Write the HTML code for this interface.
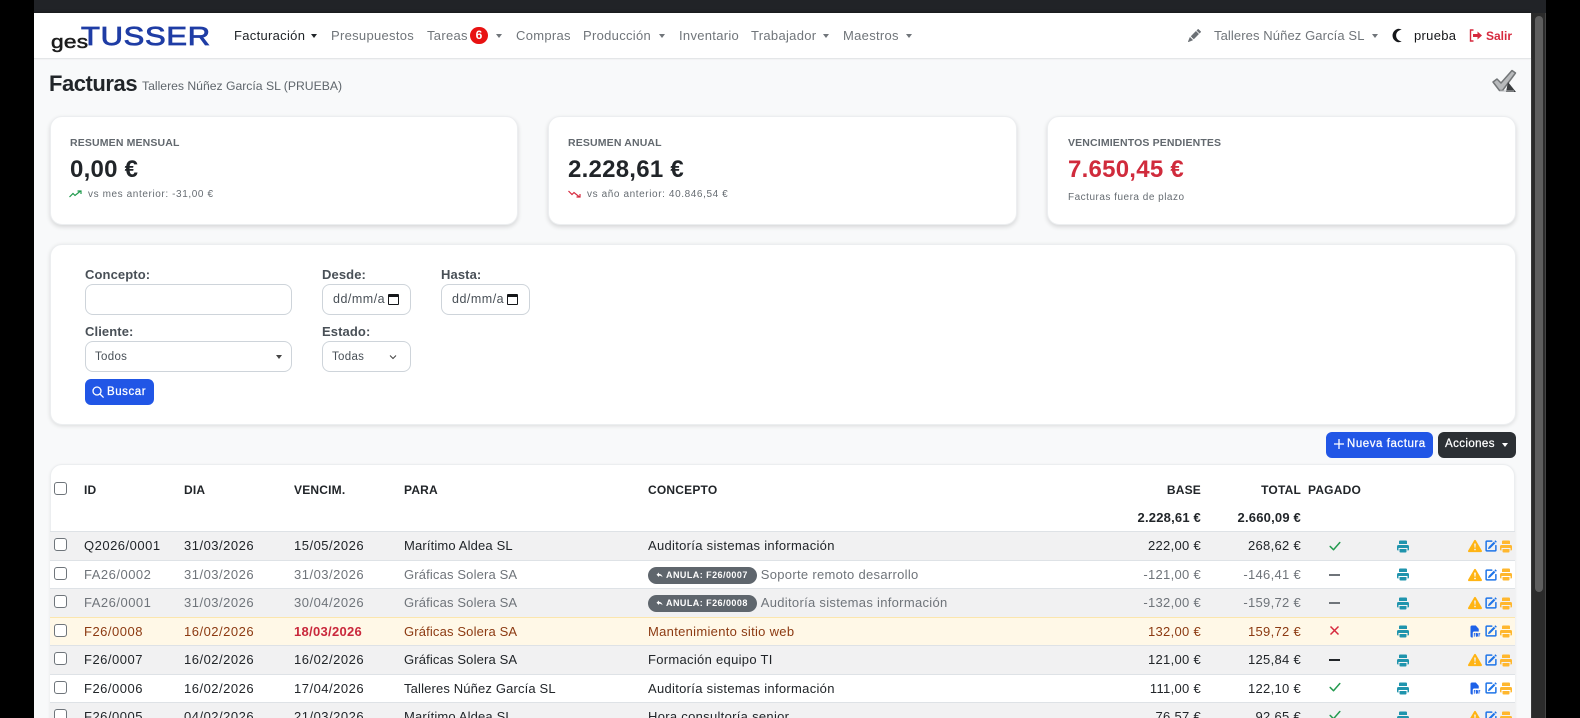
<!DOCTYPE html>
<html lang="es"><head><meta charset="utf-8"><title>Facturas</title>
<style>
*{box-sizing:border-box}
html,body{margin:0;padding:0;width:1580px;height:718px;overflow:hidden;background:#000;font-family:"Liberation Sans",sans-serif;color:#212529}
.a{position:absolute;white-space:nowrap}
#page{position:absolute;left:34px;top:0;width:1497px;height:718px;background:#f8f9fa}
#stage{position:absolute;left:0;top:0;width:1580px;height:718px;overflow:hidden}
.nav{font-size:13px;letter-spacing:.3px;color:#70757a;top:28px;line-height:16px}
.car{position:absolute;width:0;height:0;border-left:3.5px solid transparent;border-right:3.5px solid transparent;border-top:4px solid #70757a}
.card{position:absolute;background:#fff;border-radius:12px;box-shadow:0 2px 5px rgba(0,0,0,.14);border:1px solid #eceef0}
.lbl{font-size:10.5px;font-weight:bold;letter-spacing:.15px;color:#62686e;top:136px;line-height:14px}
.big{font-size:24px;font-weight:bold;top:156px;line-height:28px;letter-spacing:.25px}
.sm{font-size:10px;color:#666c72;letter-spacing:.6px;top:188px;line-height:13px}
.fl{font-size:13px;font-weight:bold;color:#495057;line-height:16px;letter-spacing:.1px}
.in{position:absolute;background:#fff;border:1px solid #ced4da;border-radius:8px;font-size:11.5px;color:#495057;letter-spacing:.3px;line-height:31px;height:31px}
.dt{font-size:12.5px;letter-spacing:.5px;line-height:29px;padding-left:10px;overflow:hidden}
.btn{position:absolute;border-radius:6px;color:#fff;font-size:11.5px;letter-spacing:.55px;text-align:left;-webkit-text-stroke:.25px #fff}
.r{position:absolute;left:50px;width:1465px;height:29px;font-size:13px;letter-spacing:.3px;line-height:28px;border-top:1px solid #dee2e6}
.s{height:28px;line-height:27px}
.r span{position:absolute;top:0;white-space:nowrap}
.g{background:#f1f1f2}.w{background:#fff}
.m{color:#6f747a}
.am{background:#fff8e7;color:#8c3a12;border-top:1px solid #fbe6ae}
.ck{position:absolute;left:4px;top:6px;width:13px;height:13px;border:1px solid #6f757b;border-radius:3px;background:#fff}
.c1{left:34px;letter-spacing:.5px}.c2{left:134px;letter-spacing:.5px}.c3{left:244px;letter-spacing:.5px}.c4{left:354px;letter-spacing:.15px}.c5{left:598px}
.c6{right:314px}.c7{right:214px}
.th{font-size:12px;font-weight:bold;letter-spacing:.2px;color:#212529;line-height:14px;top:483px}
.pill{display:inline-block;background:#5f666d;color:#fff;font-size:9px;font-weight:bold;border-radius:9px;height:17px;line-height:17px;padding:0 9px 0 18px;letter-spacing:.45px;vertical-align:1px;position:relative;margin-right:4px}
.pill svg{position:absolute;left:8px;top:5px}
svg.i{position:absolute;display:block}
</style></head>
<body>
<svg width="0" height="0" style="position:absolute">
<symbol id="pr" viewBox="0 0 12 13"><path d="M3 .5h6a1 1 0 0 1 1 1V4H2V1.500a1 1 0 0 1 1-1z"/><path d="M1.500 5h9A1.500 1.500 0 0 1 12 6.500v3a1 1 0 0 1-1 1h-.5V8h-9v2.500H1a1 1 0 0 1-1-1v-3A1.500 1.500 0 0 1 1.500 5z"/><path d="M2.500 9h7v2.500a1 1 0 0 1-1 1h-5a1 1 0 0 1-1-1z"/></symbol>
<symbol id="ed" viewBox="0 0 16 16"><path d="M15.502 1.94a.5.5 0 0 1 0 .706L14.459 3.69l-2-2L13.502.646a.5.5 0 0 1 .707 0l1.293 1.293zm-1.75 2.456-2-2L4.939 9.21a.5.5 0 0 0-.121.196l-.805 2.414a.25.25 0 0 0 .316.316l2.414-.805a.5.5 0 0 0 .196-.12l6.813-6.814z"/><path d="M1 13.5A1.5 1.5 0 0 0 2.5 15h11a1.5 1.5 0 0 0 1.5-1.5v-6a.5.5 0 0 0-1 0v6a.5.5 0 0 1-.5.5h-11a.5.5 0 0 1-.5-.5v-11a.5.5 0 0 1 .5-.5H9a.5.5 0 0 0 0-1H2.5A1.5 1.5 0 0 0 1 2.5v11z" stroke="currentColor" stroke-width="1"/></symbol>
<symbol id="wa" viewBox="0 0 16 16"><path d="M8.982 1.566a1.13 1.13 0 0 0-1.96 0L.165 13.233c-.457.778.091 1.767.98 1.767h13.713c.889 0 1.438-.99.98-1.767L8.982 1.566zM8 5c.535 0 .954.462.9.995l-.35 3.507a.552.552 0 0 1-1.1 0L7.1 5.995A.905.905 0 0 1 8 5zm.002 6a1 1 0 1 1 0 2 1 1 0 0 1 0-2z"/></symbol>
<symbol id="pd" viewBox="0 0 16 16"><path d="M2 2a2 2 0 0 1 2-2h5l4 4.5V8H7a2 2 0 0 0-2 2v6H4a2 2 0 0 1-2-2V2z"/><path d="M6.5 10h2v1h-1v1h1v1h-1v2h-1zM9.2 10h1.6c.8 0 1.2.7 1.2 2.500s-.4 2.500-1.200 2.500H9.200zM12.700 10h2.300v1h-1.300v1h1.100v1h-1.100v2h-1z"/></symbol>
<symbol id="ok" viewBox="0 0 16 16"><path d="M2.500 8.500l3.800 3.800 7.200-8.300" fill="none" stroke="currentColor" stroke-width="1.700" stroke-linecap="round" stroke-linejoin="round"/></symbol>
</svg>
<div id="stage">
<div id="page"></div>
<div class="a" style="left:34px;top:0;width:1512px;height:13px;background:#212327"></div>
<div class="a" style="left:1531px;top:13px;width:15px;height:705px;background:#2b2b2b;border-left:1px solid #3a3a3a;border-right:1px solid #444"></div>
<div class="a" style="left:1535px;top:16px;width:8px;height:576px;background:#5e5e5e;border-radius:4px"></div>

<!-- navbar -->
<div class="a" style="left:34px;top:13px;width:1497px;height:46px;background:#fff;border-bottom:1px solid #e4e6e8;box-shadow:0 -1px 2px rgba(0,0,0,.3)"></div>
<div class="a" style="left:51px;top:32px;font-size:18px;line-height:20px;color:#1c1c1c;letter-spacing:.2px;transform:scaleX(1.26);transform-origin:left;-webkit-text-stroke:.5px #1c1c1c">ges</div>
<div class="a" style="left:81px;top:22px;font-size:26px;line-height:28px;color:#1f3da5;letter-spacing:.6px;transform:scaleX(1.19);transform-origin:left;-webkit-text-stroke:.8px #1f3da5">TUSSER</div>
<div class="a nav" style="left:234px;color:#212529">Facturación</div><div class="car" style="left:311px;top:34px;border-top-color:#212529"></div>
<div class="a nav" style="left:331px">Presupuestos</div>
<div class="a nav" style="left:427px">Tareas</div>
<div class="a" style="left:470px;top:27px;width:18px;height:17px;border-radius:9px;background:#e81212;color:#fff;font-size:12px;font-weight:bold;line-height:17px;text-align:center">6</div>
<div class="car" style="left:496px;top:34px"></div>
<div class="a nav" style="left:516px">Compras</div>
<div class="a nav" style="left:583px">Producción</div><div class="car" style="left:659px;top:34px"></div>
<div class="a nav" style="left:679px">Inventario</div>
<div class="a nav" style="left:751px">Trabajador</div><div class="car" style="left:823px;top:34px"></div>
<div class="a nav" style="left:843px">Maestros</div><div class="car" style="left:906px;top:34px"></div>
<svg class="i" style="left:1188px;top:29px;color:#6c7176" width="13" height="13" viewBox="0 0 16 16" fill="currentColor"><path d="M12.854.146a.5.5 0 0 0-.707 0L10.500 1.793 14.207 5.500l1.647-1.646a.5.5 0 0 0 0-.708l-3-3zm.646 6.061L9.793 2.500 3.293 9H3.500a.5.5 0 0 1 .5.500v.5h.5a.5.5 0 0 1 .5.500v.5h.5a.5.5 0 0 1 .5.500v.5h.5a.5.5 0 0 1 .5.500v.207l6.500-6.500zm-7.468 7.468A.5.5 0 0 1 6 13.500V13h-.5a.5.5 0 0 1-.5-.5V12h-.5a.5.5 0 0 1-.5-.5V11h-.5a.5.5 0 0 1-.5-.5V10h-.5a.499.499 0 0 1-.175-.032l-.179.178a.5.5 0 0 0-.11.168l-2 5a.5.5 0 0 0 .65.650l5-2a.5.5 0 0 0 .168-.110l.178-.178z"/></svg>
<div class="a nav" style="left:1214px;letter-spacing:.1px">Talleres Núñez García SL</div><div class="car" style="left:1372px;top:34px"></div>
<svg class="i" style="left:1390px;top:28px" width="12" height="15" viewBox="0 0 11 13" fill="#15171a"><path d="M7.500.300A6.300 6.300 0 0 0 7.500 12.700c1.200 0 2.400-.4 3.200-.9C7.800 11.600 5.600 9.400 5.600 6.500S7.800 1.400 10.700 1.200C9.800.700 8.700.300 7.500.300z"/></svg>
<div class="a nav" style="left:1414px;color:#15171a">prueba</div>
<svg class="i" style="left:1469px;top:29px" width="14" height="13" viewBox="0 0 14 13" fill="none" stroke="#d6293e" stroke-width="1.400"><path d="M4.500 1H1.500v11h3"/><path d="M4 5h4.500V2.500L13 6.500l-4.500 4V8H4z" fill="#d6293e" stroke="none"/></svg>
<div class="a" style="left:1486px;top:28px;font-size:12px;line-height:16px;font-weight:bold;color:#d6293e">Salir</div>

<!-- heading -->
<div class="a" style="left:49px;top:71px;font-size:22px;line-height:26px;font-weight:bold;letter-spacing:-.45px;color:#212529">Facturas</div>
<div class="a" style="left:142px;top:78px;font-size:12.2px;line-height:16px;color:#5f666c">Talleres Núñez García SL (PRUEBA)</div>
<svg class="i" style="left:1491px;top:69px" width="26" height="24" viewBox="0 0 26 24"><path d="M2 13l4-3 4 4L21 1.500l3.500 2.500-13 17.500h-3z" fill="#b8babc" stroke="#737678" stroke-width="1.500" stroke-linejoin="round"/><path d="M17 13l8 10h-10z" fill="#3a3d40"/><path d="M9 22h14" stroke="#b5b7b9" stroke-width="1"/></svg>

<!-- stat cards -->
<div class="card" style="left:50px;top:116px;width:468px;height:109px"></div>
<div class="card" style="left:548px;top:116px;width:469px;height:109px"></div>
<div class="card" style="left:1047px;top:116px;width:469px;height:109px"></div>
<div class="a lbl" style="left:70px">RESUMEN MENSUAL</div>
<div class="a big" style="left:70px">0,00 €</div>
<svg class="i" style="left:69px;top:190px" width="13" height="8" viewBox="0 0 13 8" fill="none" stroke="#1f9a4c" stroke-width="1.200"><path d="M.5 7l3.500-3.500 2 2L11.500 1M8.500 1h3.500v3"/></svg>
<div class="a sm" style="left:88px">vs mes anterior: -31,00 €</div>
<div class="a lbl" style="left:568px">RESUMEN ANUAL</div>
<div class="a big" style="left:568px">2.228,61 €</div>
<svg class="i" style="left:568px;top:190px" width="13" height="8" viewBox="0 0 13 8" fill="none" stroke="#d6293e" stroke-width="1.200"><path d="M.5 1L4 4.500l2-2L11.500 7M8.500 7h3.500V4"/></svg>
<div class="a sm" style="left:587px">vs año anterior: 40.846,54 €</div>
<div class="a lbl" style="left:1068px">VENCIMIENTOS PENDIENTES</div>
<div class="a big" style="left:1068px;color:#d02b3c">7.650,45 €</div>
<div class="a sm" style="left:1068px;top:191px;letter-spacing:.5px">Facturas fuera de plazo</div>

<!-- filters -->
<div class="card" style="left:50px;top:244px;width:1466px;height:181px;box-shadow:0 1px 4px rgba(0,0,0,.12)"></div>
<div class="a fl" style="left:85px;top:267px">Concepto:</div>
<div class="in" style="left:85px;top:284px;width:207px"></div>
<div class="a fl" style="left:322px;top:267px">Desde:</div>
<div class="in dt" style="left:322px;top:284px;width:89px">dd/mm/a</div>
<div class="a" style="left:388px;top:294px;width:11px;height:11px;border:1.500px solid #15171a;border-top-width:3px;border-radius:1px;background:#fff"></div>
<div class="a fl" style="left:441px;top:267px">Hasta:</div>
<div class="in dt" style="left:441px;top:284px;width:89px">dd/mm/a</div>
<div class="a" style="left:507px;top:294px;width:11px;height:11px;border:1.500px solid #15171a;border-top-width:3px;border-radius:1px;background:#fff"></div>
<div class="a fl" style="left:85px;top:324px">Cliente:</div>
<div class="in" style="left:85px;top:341px;width:207px;padding-left:9px">Todos</div>
<div class="car" style="left:276px;top:355px;border-top-color:#444"></div>
<div class="a fl" style="left:322px;top:324px">Estado:</div>
<div class="in" style="left:322px;top:341px;width:89px;padding-left:9px">Todas</div>
<svg class="i" style="left:389px;top:354px" width="8" height="6" viewBox="0 0 8 6" fill="none" stroke="#444" stroke-width="1"><path d="M1 1.500l3 3 3-3"/></svg>
<div class="btn" style="left:85px;top:379px;width:69px;height:26px;background:#2156e6;line-height:26px;padding-left:22px">Buscar</div>
<svg class="i" style="left:92px;top:386px" width="12" height="12" viewBox="0 0 12 12" fill="none" stroke="#fff" stroke-width="1.300"><circle cx="5" cy="5" r="4"/><path d="M8 8l3.200 3.200" stroke-linecap="round"/></svg>

<!-- buttons -->
<div class="btn" style="left:1326px;top:432px;width:107px;height:26px;background:#2156e6;line-height:25px;padding-left:21px">Nueva factura</div>
<svg class="i" style="left:1333px;top:438px" width="12" height="12" viewBox="0 0 12 12" stroke="#fff" stroke-width="1.300"><path d="M6 1v10M1 6h10"/></svg>
<div class="btn" style="left:1438px;top:432px;width:78px;height:26px;background:#2c3034;line-height:25px;padding-left:7px;letter-spacing:.4px">Acciones</div>
<div class="car" style="left:1502px;top:443px;border-top-color:#fff"></div>

<!-- table -->
<div class="card" style="left:50px;top:464px;width:1465px;height:270px;box-shadow:0 1px 3px rgba(0,0,0,.08);overflow:hidden"></div>
<div class="ck a" style="left:54px;top:482px"></div>
<div class="a th" style="left:84px">ID</div>
<div class="a th" style="left:184px">DIA</div>
<div class="a th" style="left:294px">VENCIM.</div>
<div class="a th" style="left:404px">PARA</div>
<div class="a th" style="left:648px">CONCEPTO</div>
<div class="a th" style="right:379px">BASE</div>
<div class="a th" style="right:279px">TOTAL</div>
<div class="a th" style="left:1308px">PAGADO</div>
<div class="a th" style="right:379px;top:511px;font-size:13px">2.228,61 €</div>
<div class="a th" style="right:279px;top:511px;font-size:13px">2.660,09 €</div>

<div class="r g" style="top:531px"><i class="ck"></i><span class="c1">Q2026/0001</span><span class="c2">31/03/2026</span><span class="c3">15/05/2026</span><span class="c4">Marítimo Aldea SL</span><span class="c5">Auditoría sistemas información</span><span class="c6">222,00 €</span><span class="c7">268,62 €</span></div>
<div class="r w m s" style="top:560px"><i class="ck"></i><span class="c1">FA26/0002</span><span class="c2">31/03/2026</span><span class="c3">31/03/2026</span><span class="c4">Gráficas Solera SA</span><span class="c5"><b class="pill"><svg width="7" height="6" viewBox="0 0 7 6"><path d="M3 .5L.5 2.700 3 5V3.600c1.500 0 2.500.4 3.500 1.600C6.200 3.300 5 2 3 1.900z" fill="#fff"/></svg>ANULA: F26/0007</b>Soporte remoto desarrollo</span><span class="c6">-121,00 €</span><span class="c7">-146,41 €</span></div>
<div class="r g m" style="top:588px"><i class="ck"></i><span class="c1">FA26/0001</span><span class="c2">31/03/2026</span><span class="c3">30/04/2026</span><span class="c4">Gráficas Solera SA</span><span class="c5"><b class="pill"><svg width="7" height="6" viewBox="0 0 7 6"><path d="M3 .5L.5 2.700 3 5V3.600c1.500 0 2.500.4 3.500 1.600C6.200 3.300 5 2 3 1.900z" fill="#fff"/></svg>ANULA: F26/0008</b>Auditoría sistemas información</span><span class="c6">-132,00 €</span><span class="c7">-159,72 €</span></div>
<div class="r am s" style="top:617px"><i class="ck"></i><span class="c1">F26/0008</span><span class="c2">16/02/2026</span><span class="c3" style="color:#c9283c;font-weight:bold;letter-spacing:.3px">18/03/2026</span><span class="c4">Gráficas Solera SA</span><span class="c5">Mantenimiento sitio web</span><span class="c6">132,00 €</span><span class="c7">159,72 €</span></div>
<div class="r g" style="top:645px"><i class="ck"></i><span class="c1">F26/0007</span><span class="c2">16/02/2026</span><span class="c3">16/02/2026</span><span class="c4">Gráficas Solera SA</span><span class="c5">Formación equipo TI</span><span class="c6">121,00 €</span><span class="c7">125,84 €</span></div>
<div class="r w s" style="top:674px"><i class="ck"></i><span class="c1">F26/0006</span><span class="c2">16/02/2026</span><span class="c3">17/04/2026</span><span class="c4">Talleres Núñez García SL</span><span class="c5">Auditoría sistemas información</span><span class="c6">111,00 €</span><span class="c7">122,10 €</span></div>
<div class="r g" style="top:702px"><i class="ck"></i><span class="c1">F26/0005</span><span class="c2">04/02/2026</span><span class="c3">21/03/2026</span><span class="c4">Marítimo Aldea SL</span><span class="c5">Hora consultoría senior</span><span class="c6">76,57 €</span><span class="c7">92,65 €</span></div>

<!-- status icons -->
<svg class="i" style="left:1328px;top:539px;color:#239a4f" width="14" height="14" fill="currentColor"><use href="#ok"/></svg>
<div class="a" style="left:1329px;top:574px;width:11px;height:1.500px;background:#6f747a"></div>
<div class="a" style="left:1329px;top:602px;width:11px;height:1.500px;background:#6f747a"></div>
<svg class="i" style="left:1329px;top:625px" width="11" height="11" viewBox="0 0 11 11" stroke="#d6293e" stroke-width="1.500"><path d="M1.500 1.500l8 8M9.500 1.500l-8 8"/></svg>
<div class="a" style="left:1329px;top:659px;width:11px;height:1.500px;background:#212529"></div>
<svg class="i" style="left:1328px;top:680px;color:#239a4f" width="14" height="14" fill="currentColor"><use href="#ok"/></svg>
<svg class="i" style="left:1328px;top:708px;color:#239a4f" width="14" height="14" fill="currentColor"><use href="#ok"/></svg>

<!-- print (teal) -->
<svg class="i" style="left:1397px;top:540px" width="12" height="13" fill="#1f94ad"><use href="#pr"/></svg>
<svg class="i" style="left:1397px;top:568px" width="12" height="13" fill="#1f94ad"><use href="#pr"/></svg>
<svg class="i" style="left:1397px;top:597px" width="12" height="13" fill="#1f94ad"><use href="#pr"/></svg>
<svg class="i" style="left:1397px;top:625px" width="12" height="13" fill="#1f94ad"><use href="#pr"/></svg>
<svg class="i" style="left:1397px;top:654px" width="12" height="13" fill="#1f94ad"><use href="#pr"/></svg>
<svg class="i" style="left:1397px;top:682px" width="12" height="13" fill="#1f94ad"><use href="#pr"/></svg>
<svg class="i" style="left:1397px;top:711px" width="12" height="13" fill="#1f94ad"><use href="#pr"/></svg>

<!-- row actions -->
<svg class="i" style="left:1468px;top:539px" width="14" height="14" fill="#ffb414"><use href="#wa"/></svg>
<svg class="i" style="left:1468px;top:568px" width="14" height="14" fill="#ffb414"><use href="#wa"/></svg>
<svg class="i" style="left:1468px;top:596px" width="14" height="14" fill="#ffb414"><use href="#wa"/></svg>
<svg class="i" style="left:1469px;top:625px" width="12" height="13" fill="#1e62e8"><use href="#pd"/></svg>
<svg class="i" style="left:1468px;top:653px" width="14" height="14" fill="#ffb414"><use href="#wa"/></svg>
<svg class="i" style="left:1469px;top:682px" width="12" height="13" fill="#1e62e8"><use href="#pd"/></svg>
<svg class="i" style="left:1468px;top:710px" width="14" height="14" fill="#ffb414"><use href="#wa"/></svg>

<svg class="i" style="left:1485px;top:540px;color:#1e74e8" width="12" height="12" fill="currentColor"><use href="#ed"/></svg>
<svg class="i" style="left:1485px;top:569px;color:#1e74e8" width="12" height="12" fill="currentColor"><use href="#ed"/></svg>
<svg class="i" style="left:1485px;top:597px;color:#1e74e8" width="12" height="12" fill="currentColor"><use href="#ed"/></svg>
<svg class="i" style="left:1485px;top:625px;color:#1e74e8" width="12" height="12" fill="currentColor"><use href="#ed"/></svg>
<svg class="i" style="left:1485px;top:654px;color:#1e74e8" width="12" height="12" fill="currentColor"><use href="#ed"/></svg>
<svg class="i" style="left:1485px;top:682px;color:#1e74e8" width="12" height="12" fill="currentColor"><use href="#ed"/></svg>
<svg class="i" style="left:1485px;top:711px;color:#1e74e8" width="12" height="12" fill="currentColor"><use href="#ed"/></svg>

<svg class="i" style="left:1500px;top:540px" width="12" height="13" fill="#ffb72e"><use href="#pr"/></svg>
<svg class="i" style="left:1500px;top:568px" width="12" height="13" fill="#ffb72e"><use href="#pr"/></svg>
<svg class="i" style="left:1500px;top:597px" width="12" height="13" fill="#ffb72e"><use href="#pr"/></svg>
<svg class="i" style="left:1500px;top:625px" width="12" height="13" fill="#ffb72e"><use href="#pr"/></svg>
<svg class="i" style="left:1500px;top:654px" width="12" height="13" fill="#ffb72e"><use href="#pr"/></svg>
<svg class="i" style="left:1500px;top:682px" width="12" height="13" fill="#ffb72e"><use href="#pr"/></svg>
<svg class="i" style="left:1500px;top:711px" width="12" height="13" fill="#ffb72e"><use href="#pr"/></svg>
</div>
</body></html>
